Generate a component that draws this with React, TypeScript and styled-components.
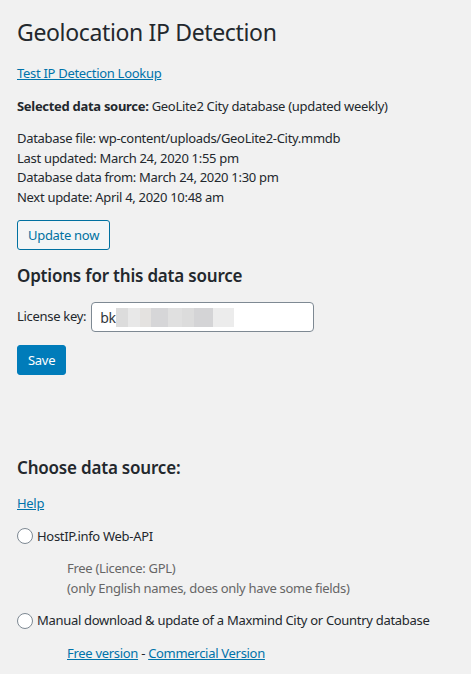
import React from 'react'
import styled, { createGlobalStyle } from 'styled-components'

const GlobalStyle = createGlobalStyle`
  html, body {
    margin: 0;
    padding: 0;
    background: #f1f1f1;
  }
  body {
    color: #23282d;
    font-family: 'Noto Sans', 'Open Sans', sans-serif;
    font-size: 13px;
    line-height: 1.5;
    letter-spacing: -0.3px;
  }
`

const Wrap = styled.div`
  padding: 0 17px 20px;
`

const Title = styled.h1`
  margin: 0;
  padding: 17px 0 4px;
  font-size: 23px;
  font-weight: 400;
  line-height: 30px;
  letter-spacing: -0.35px;
  color: #23282d;
`

const Para = styled.p<{ $top?: number }>`
  margin: ${({ $top }) => ($top ?? 13)}px 0 0;
  line-height: 19.5px;
`

const Link = styled.a`
  color: #0073aa;
  text-decoration: underline;
`

const SubHeading = styled.h3<{ $top: number }>`
  margin: ${({ $top }) => $top}px 0 0;
  font-size: 17px;
  font-weight: 600;
  line-height: 20px;
  letter-spacing: -0.2px;
  color: #23282d;
`

const Button = styled.button<{ $primary?: boolean }>`
  display: block;
  margin-top: 13px;
  height: 30px;
  padding: 0 10px;
  box-sizing: border-box;
  border-radius: 3px;
  font-family: inherit;
  font-size: 13px;
  letter-spacing: -0.3px;
  line-height: 28px;
  cursor: pointer;
  border: 1px solid ${({ $primary }) => ($primary ? '#007cba' : '#0071a1')};
  background: ${({ $primary }) => ($primary ? '#007cba' : '#f3f5f6')};
  color: ${({ $primary }) => ($primary ? '#fff' : '#0071a1')};
`

const FieldRow = styled.div`
  display: flex;
  align-items: center;
  gap: 5px;
  margin-top: 16px;
  height: 30px;
`

const Input = styled.div`
  display: flex;
  align-items: center;
  width: 223px;
  height: 30px;
  box-sizing: border-box;
  padding: 0 8px;
  border: 1px solid #7e8993;
  border-radius: 4px;
  background: #fff;
  font-size: 14px;
  color: #32373c;
`

const Blur = styled.span`
  display: inline-block;
  width: 118px;
  height: 19px;
  background: linear-gradient(
    90deg,
    #dcdcdc 0 10%,
    #e8e8e8 10% 20%,
    #e4e2e0 20% 30%,
    #d6d6d8 30% 44%,
    #e0e0e0 44% 56%,
    #dcdcdc 56% 66%,
    #d4d4d6 66% 82%,
    #ececec 82% 100%
  );
`

const RadioRow = styled.label`
  display: flex;
  align-items: center;
  gap: 4px;
  margin-top: 13px;
  line-height: 19.5px;
  font-size: 13px;
`

const Radio = styled.span`
  width: 16px;
  height: 16px;
  box-sizing: border-box;
  border: 1px solid #7e8993;
  border-radius: 50%;
  background: #fff;
`

const Description = styled.div<{ $muted?: boolean }>`
  margin: 13px 0 0 50px;
  line-height: 19.5px;
  color: ${({ $muted }) => ($muted ? '#666' : '#23282d')};
`

export default function App() {
  return (
    <>
      <GlobalStyle />
      <Wrap>
        <Title>Geolocation IP Detection</Title>
        <Para>
          <Link href="#">Test IP Detection Lookup</Link>
        </Para>
        <Para>
          <b>Selected data source:</b> GeoLite2 City database (updated weekly)
        </Para>
        <Para>
          Database file: wp-content/uploads/GeoLite2-City.mmdb
          <br />
          Last updated: March 24, 2020 1:55 pm
          <br />
          Database data from: March 24, 2020 1:30 pm
          <br />
          Next update: April 4, 2020 10:48 am
        </Para>
        <Button type="button">Update now</Button>

        <SubHeading $top={16}>Options for this data source</SubHeading>
        <FieldRow>
          <span>License key:</span>
          <Input>
            bk
            <Blur />
          </Input>
        </FieldRow>
        <Button type="button" $primary>
          Save
        </Button>

        <SubHeading $top={83}>Choose data source:</SubHeading>
        <Para $top={16}>
          <Link href="#">Help</Link>
        </Para>
        <RadioRow>
          <Radio />
          HostIP.info Web-API
        </RadioRow>
        <Description $muted>
          Free (Licence: GPL)
          <br />
          (only English names, does only have some fields)
        </Description>
        <RadioRow>
          <Radio />
          Manual download &amp; update of a Maxmind City or Country database
        </RadioRow>
        <Description>
          <Link href="#">Free version</Link> - <Link href="#">Commercial Version</Link>
        </Description>
      </Wrap>
    </>
  )
}
